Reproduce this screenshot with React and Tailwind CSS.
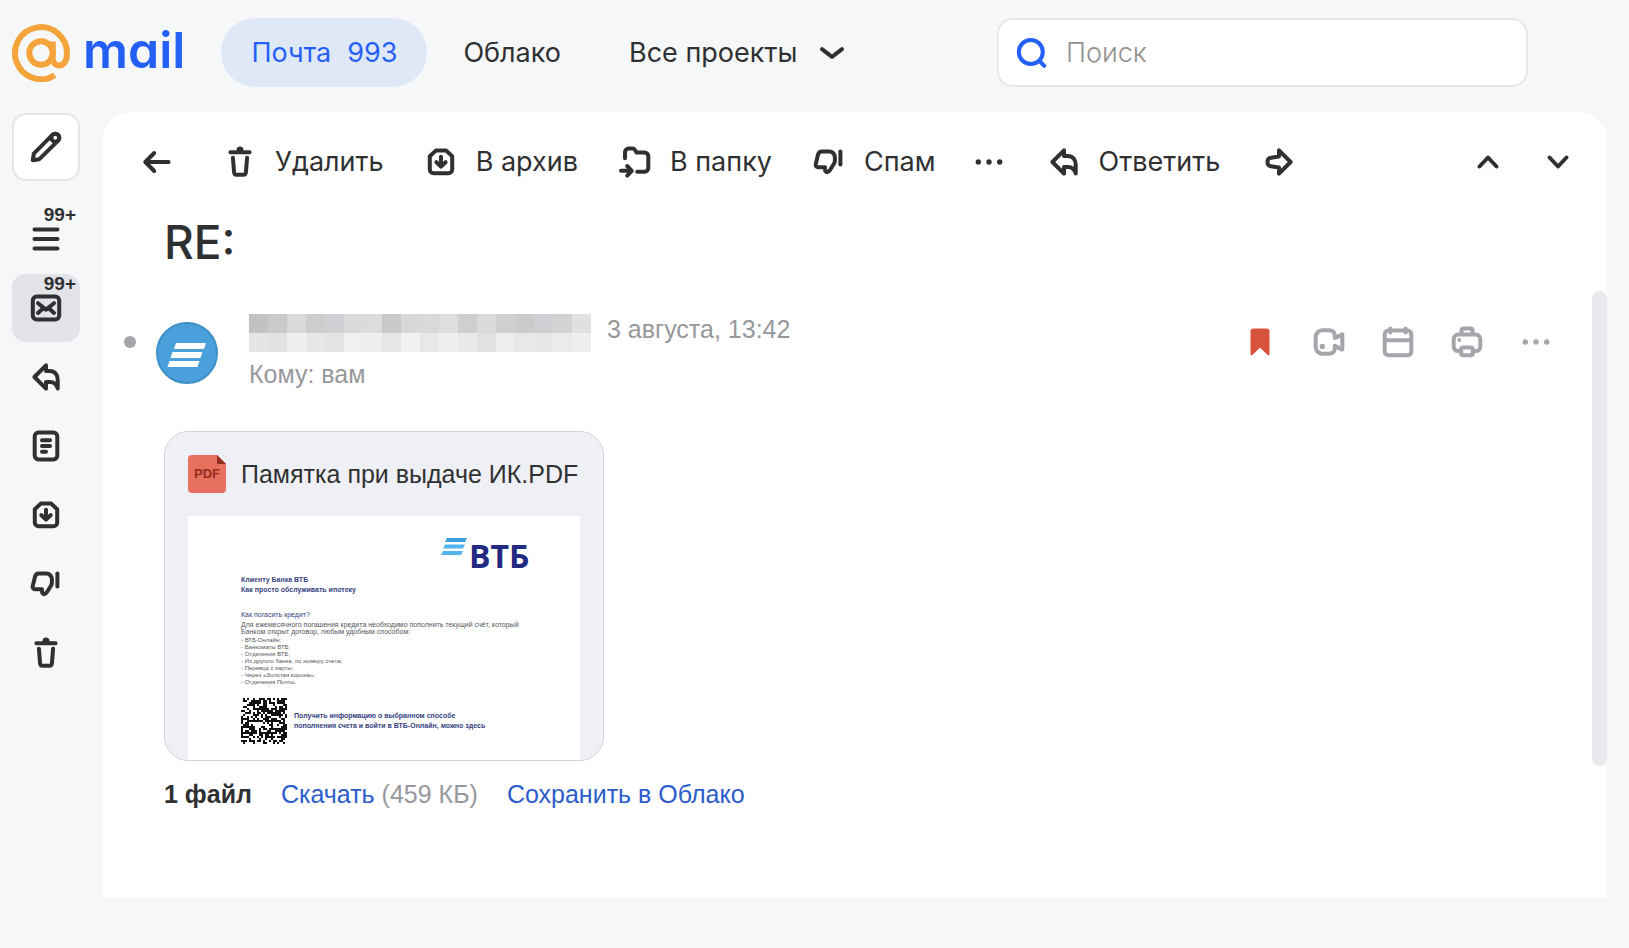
import { useState } from 'react';

const ICONS = {
  pencil: (
    <>
      <path d="M2.8 29.2l1-6.6L22.4 3.9a4 4 0 0 1 5.7 5.7L9.4 28.2z" />
      <circle cx="25.3" cy="6.8" r="4" />
    </>
  ),
  menu: <path d="M4.5 6.5h23M4.500 16h23M4.5 25.5h23" />,
  unread: (
    <>
      <rect x="2.8" y="4.4" width="26.4" height="23.2" rx="4" />
      <path d="M8 11.2l8 6.4 8-6.4M8 21l3.8-3.400M24 21l-3.8-3.4" />
    </>
  ),
  reply: <path d="M16 4.3L4.4 16 16 27.7V21h4c3.7 0 6.3 2 7.7 6.5v-9c0-5.2-3-8.5-8-8.500H16z" />,
  forward: <path d="M16 4.3L27.6 16 16 27.7v-6.2l-8-1.200a3.800 3.800 0 0 1-3.5-3.8v-1a3.8 3.8 0 0 1 3.5-3.8l8-1.2z" />,
  doc: (
    <>
      <rect x="4.7" y="2.6" width="22.6" height="26.8" rx="3.8" />
      <path d="M12 10.3h8M12 16h8M12 21.7h4" />
    </>
  ),
  archive: (
    <>
      <path d="M10.8 4.6h10.4l6 5.6v13.200a3.800 3.8 0 0 1-3.8 3.8H8.6a3.8 3.8 0 0 1-3.8-3.8V10.200z" />
      <path d="M16 10.800V20M11.4 16.2l4.6 4.400 4.600-4.4" />
    </>
  ),
  spam: (
    <>
      <path d="M8.800 5.6h7.600a5.500 5.5 0 0 1 5.5 5.5v3.4c0 1.3-.3 2.3-1 3.3l-4 6.4c-1 1.5-2 2.2-3.2 1.8-1.2-.4-1.7-1.6-1.7-3v-1.7H5a2.4 2.4 0 0 1-2.3-3l2.3-9.6a4 4 0 0 1 3.800-3.1z" />
      <path d="M27.400 5.600v12.800" />
    </>
  ),
  trash: (
    <>
      <path d="M6.4 6.3h19.2M8.9 11.7l1.2 14.6a2.6 2.6 0 0 0 2.6 2.4h6.6a2.6 2.6 0 0 0 2.6-2.4l1.2-14.6" />
      <circle cx="16" cy="4" r="1.5" fill="currentColor" />
    </>
  ),
  folder: (
    <>
      <path d="M6 12.3v-6a3.7 3.7 0 0 1 3.7-3.7h3.8c1 0 1.8.4 2.3 1.2l1.800 2.8h8a3.7 3.7 0 0 1 3.7 3.7V22a3.7 3.7 0 0 1-3.7 3.7h-7.4" />
      <path d="M2 24.800h10.500M8.200 20l4.600 4.800-4.600 4.8" />
    </>
  ),
  back: <path d="M27.600 16H4.6M13.2 7l-8.900 9 8.900 9" />,
  up: <path d="M7.500 20.5l8.500-9 8.500 9" />,
  down: <path d="M7.500 11.500l8.5 9 8.5-9" />,
  chevron: <path d="M6 12.200l10 7.600 10-7.6" />,
  more: (
    <g fill="currentColor" stroke="none">
      <circle cx="5.300" cy="16" r="2.700" />
      <circle cx="16" cy="16" r="2.7" />
      <circle cx="26.7" cy="16" r="2.7" />
    </g>
  ),
  search: (
    <>
      <circle cx="14.800" cy="15" r="12" />
      <path d="M23.500 24l4.800 4.800" />
    </>
  ),
  bookmark: (
    <path
      d="M9 2.4h14a2.5 2.5 0 0 1 2.5 2.5v23.3c0 1.2-1 1.5-1.8.7L16 21.8l-7.700 7.1c-.8.8-1.8.5-1.800-.7V4.900A2.5 2.5 0 0 1 9 2.400z"
      fill="currentColor"
      stroke="none"
    />
  ),
  video: (
    <>
      <path d="M9.3 4.300h6.500c3.7 0 5.400 1.5 6 4.600v3.200l7.500-3.700v15.200l-7.500-3.700v3.200c-.6 3-2.300 4.600-6 4.600H9.300a6.600 6.6 0 0 1-6.6-6.600V10.900a6.600 6.600 0 0 1 6.6-6.600z" />
      <circle cx="9.3" cy="20.4" r="2.700" fill="currentColor" stroke="none" />
    </>
  ),
  calendar: (
    <>
      <rect x="2.7" y="4.6" width="26.600" height="24.600" rx="3.600" />
      <path d="M2.700 14.2h26.600M8.300 2.500v4M23.700 2.500v4" />
    </>
  ),
  printer: (
    <>
      <path d="M10 25H7a4.300 4.300 0 0 1-4.300-4.300v-7.400A4.800 4.800 0 0 1 7.500 8.500h17a4.800 4.800 0 0 1 4.800 4.800v7.400A4.300 4.300 0 0 1 25 25h-3" />
      <path d="M10.500 8V4.500a2 2 0 0 1 2-2h7a2 2 0 0 1 2 2V8" />
      <rect x="10.200" y="21.500" width="11.600" height="7.800" rx="2" />
      <circle cx="8.300" cy="14" r="1.900" fill="currentColor" stroke="none" />
    </>
  ),
};

function Icon({ name, className = 'size-8' }) {
  return (
    <svg
      className={`shrink-0 overflow-visible ${className}`}
      viewBox="0 0 32 32"
      fill="none"
      stroke="currentColor"
      strokeWidth="4"
      strokeLinecap="round"
      strokeLinejoin="round"
      aria-hidden="true"
    >
      {ICONS[name]}
    </svg>
  );
}

const FOLDERS = [
  { icon: 'menu', label: 'Входящие', count: '99+' },
  { icon: 'unread', label: 'Непрочитанные', count: '99+', active: true },
  { icon: 'reply', label: 'Отправленные' },
  { icon: 'doc', label: 'Черновики' },
  { icon: 'archive', label: 'Архив' },
  { icon: 'spam', label: 'Спам' },
  { icon: 'trash', label: 'Корзина' },
];

const MOVE_ACTIONS = [
  { icon: 'trash', text: 'Удалить' },
  { icon: 'archive', text: 'В архив' },
  { icon: 'folder', text: 'В папку' },
  { icon: 'spam', text: 'Спам' },
];

const REPLY_ACTIONS = [
  { icon: 'more', label: 'Ещё' },
  { icon: 'reply', text: 'Ответить' },
  { icon: 'forward', label: 'Переслать' },
];

const LETTER_ACTIONS = [
  { icon: 'video', label: 'Создать звонок' },
  { icon: 'calendar', label: 'Создать событие' },
  { icon: 'printer', label: 'Распечатать' },
  { icon: 'more', label: 'Ещё' },
];

// hidden sender name, two rows of squares
const MOSAIC = [
  '#c3c2c1', '#cacaca', '#d9d9d9', '#cfcccd', '#cfd0d3', '#dadada', '#dcdcdc', '#c9c9c9', '#d8d8d8',
  '#d9d9d9', '#dedede', '#cfcfcf', '#d9d9dc', '#d0d0d0', '#cbcbcb', '#cfd0d3', '#d3d3d3', '#e0e0e3',
  '#e5e5e4', '#e2e2e2', '#eeeeee', '#e7e7e7', '#e4e4e4', '#f0f0f0', '#edf0ef', '#e6e6e6', '#f1f1f1',
  '#e8e8e8', '#efefef', '#e9e9e9', '#e1e1e1', '#eeeeee', '#e8e8e8', '#e7e7e7', '#ebebeb', '#eeeeee',
];

const BULLETS = [
  'ВТБ-Онлайн;',
  'Банкоматы ВТБ;',
  'Отделения ВТБ;',
  'Из другого банка, по номеру счета;',
  'Перевод с карты;',
  'Через «Золотая корона»;',
  'Отделения Почты.',
];

const QR_SIZE = 23;
const QR_CELLS = [];
for (let y = 0; y < QR_SIZE; y++) {
  for (let x = 0; x < QR_SIZE; x++) {
    const n = Math.sin(x * 12.9898 + y * 78.233) * 43758.5453;
    if (n - Math.floor(n) > 0.46) QR_CELLS.push([x, y]);
  }
}

function Logo() {
  return (
    <a href="#" className="flex items-start gap-[13px]" aria-label="Почта Mail">
      <svg className="size-[58px]" viewBox="0 0 58 58" fill="none" stroke="#f4a43a" strokeWidth="6">
        <circle cx="29" cy="29" r="11.7" />
        <path d="M40.7 17.5v16c0 4.500 2.5 8 6.500 8s7.800-3.800 7.800-12.500a26 26 0 1 0-12.200 22.200" />
      </svg>
      <span className="font-['Inter',sans-serif] text-[50px] font-semibold leading-[52px] text-[#2560f6] [font-feature-settings:'cv11']">
        mail
      </span>
    </a>
  );
}

function Header() {
  return (
    <header className="flex items-center pb-[25px] pl-3 pr-[101px] pt-[18px] text-[27px] leading-9">
      <Logo />
      <nav className="ml-9 flex items-center">
        <a href="#" className="flex h-[69px] items-center gap-4 rounded-full bg-[#dfe8f7] px-[30px] text-[#2560f6]">
          <span>Почта</span>
          <span>993</span>
        </a>
        <a href="#" className="ml-9">
          Облако
        </a>
        <button type="button" className="ml-[68px] flex items-center gap-[19px]">
          Все проекты
          <Icon name="chevron" />
        </button>
      </nav>
      <label className="ml-auto flex h-[69px] w-[531px] items-center gap-[18px] rounded-2xl border-2 border-[#e6e7eb] bg-white px-[17px]">
        <Icon name="search" className="size-8 text-[#2560f6]" />
        <input
          type="text"
          placeholder="Поиск"
          aria-label="Поиск"
          className="w-full min-w-0 bg-transparent font-light outline-none placeholder:text-[#919191]"
        />
      </label>
    </header>
  );
}

function Sidebar() {
  return (
    <aside className="flex w-[103px] shrink-0 flex-col pl-3 pt-px">
      <button
        type="button"
        aria-label="Написать письмо"
        className="mb-6 flex size-[68px] items-center justify-center rounded-[14px] border-2 border-[#e5e6ec] bg-white"
      >
        <Icon name="pencil" />
      </button>
      <nav className="flex flex-col gap-px">
        {FOLDERS.map((f) => (
          <a
            key={f.icon}
            href="#"
            aria-label={f.label}
            className={`relative flex size-[68px] items-center justify-center rounded-[14px] ${f.active ? 'bg-[#e3e4ea]' : ''}`}
          >
            <Icon name={f.icon} />
            {f.count && (
              <span className="absolute right-1 top-0 font-['Liberation_Sans',Arial,sans-serif] text-[19px] font-bold leading-5">
                {f.count}
              </span>
            )}
          </a>
        ))}
      </nav>
    </aside>
  );
}

function ToolbarButton({ icon, text, label }) {
  return (
    <button type="button" aria-label={label} className="flex items-center gap-[19px] whitespace-nowrap">
      <Icon name={icon} />
      {text}
    </button>
  );
}

function Toolbar() {
  return (
    <div className="flex h-12 items-center pl-[38px] pr-[33px] text-[27px] leading-9">
      <button type="button" aria-label="Назад">
        <Icon name="back" />
      </button>
      <div className="ml-[51px] flex gap-[41px]">
        {MOVE_ACTIONS.map((a) => (
          <ToolbarButton key={a.icon} {...a} />
        ))}
      </div>
      <div className="ml-[37px] flex gap-[43px]">
        {REPLY_ACTIONS.map((a) => (
          <ToolbarButton key={a.icon} {...a} />
        ))}
      </div>
      <div className="ml-auto flex gap-[38px]">
        <button type="button" aria-label="Предыдущее письмо">
          <Icon name="up" />
        </button>
        <button type="button" aria-label="Следующее письмо">
          <Icon name="down" />
        </button>
      </div>
    </div>
  );
}

function LetterHead({ flagged, onFlag }) {
  return (
    <div className="flex items-start pl-[21px] pr-10 pt-[23px] text-[#97989c]">
      <span className="mt-[22px] size-3 rounded-full bg-[#a5a6ac]" />
      <svg className="ml-5 mt-2 size-[62px]" viewBox="0 0 62 62" aria-hidden="true">
        <circle cx="31" cy="31" r="30" fill="#4aa0da" stroke="#3d8fc8" strokeWidth="2" />
        <path d="M20 21h30l-2 6H18zM16.500 30h30l-2 6h-30zM13.500 39h30l-2 6h-30z" fill="#fff" />
      </svg>
      <div className="ml-[31px]">
        <div className="flex items-start gap-4">
          <div className="grid grid-cols-[repeat(18,19px)]" aria-hidden="true">
            {MOSAIC.map((color, i) => (
              <span key={i} className="h-[19px]" style={{ backgroundColor: color }} />
            ))}
          </div>
          <time className="whitespace-nowrap text-[25px] leading-[30px]">3 августа, 13:42</time>
        </div>
        <p className="mt-[7px] text-[25px] leading-[30px]">Кому: вам</p>
      </div>
      <div className="ml-auto mt-3 flex gap-[37px] text-[#a5a6ac]">
        <button
          type="button"
          aria-label="Отметить флажком"
          onClick={onFlag}
          className={flagged ? 'text-[#d8533b]' : ''}
        >
          <Icon name="bookmark" />
        </button>
        {LETTER_ACTIONS.map((a) => (
          <button key={a.icon} type="button" aria-label={a.label}>
            <Icon name={a.icon} />
          </button>
        ))}
      </div>
    </div>
  );
}

function Preview() {
  return (
    <div className="h-[244px] overflow-hidden whitespace-nowrap bg-white pl-[53px] text-[7px] leading-[7px] text-[#55565c]">
      <div className="ml-[200px] flex items-start pt-[22px]">
        <svg className="h-[17px] w-[26px]" viewBox="0 0 26 17" aria-hidden="true">
          <path d="M6 0h20l-2 4H4z" fill="#3f9fdc" />
          <path d="M4 6.5h20l-2 4H2z" fill="#55b4ec" />
          <path d="M2 13h20l-2 4H0z" fill="#55b4ec" />
        </svg>
        <span className="ml-0.5 font-['Open_Sans',sans-serif] text-[32px] font-bold leading-9 text-[#232a82]">ВТБ</span>
      </div>
      <div className="mt-px font-bold leading-[10px] text-[#363f80]">
        <p>Клиенту Банка ВТБ</p>
        <p>Как просто обслуживать ипотеку</p>
      </div>
      <p className="mt-4 text-[#363f80]">Как погасить кредит?</p>
      <p className="mt-[3px]">Для ежемесячного погашения кредита необходимо пополнить текущий счёт, который</p>
      <p>Банком открыт договор, любым удобным способом:</p>
      <ul className="mt-0.5 text-[6px]">
        {BULLETS.map((b) => (
          <li key={b}>- {b}</li>
        ))}
      </ul>
      <div className="mt-3 flex items-center gap-[7px]">
        <svg className="size-[46px]" viewBox="0 0 23 23" shapeRendering="crispEdges" aria-hidden="true">
          {QR_CELLS.map(([x, y]) => (
            <rect key={`${x}-${y}`} x={x} y={y} width="1" height="1" fill="#111" />
          ))}
        </svg>
        <div className="font-bold leading-[10px] text-[#363f80]">
          <p>Получить информацию о выбранном способе</p>
          <p>пополнения счета и войти в ВТБ-Онлайн, можно здесь</p>
        </div>
      </div>
    </div>
  );
}

function Attachment() {
  return (
    <figure className="w-[440px] overflow-hidden rounded-3xl border border-[#d5d6de] bg-[#eff0f5] px-[23px] pt-[23px]">
      <figcaption className="mb-[23px] flex items-center gap-[15px] text-[25px] leading-[38px]">
        <span className="relative flex size-[38px] items-center justify-center overflow-hidden rounded-sm bg-[#e8705f] font-['Liberation_Sans',Arial,sans-serif] text-[13px] font-bold text-[#922e20]">
          PDF
          <svg className="absolute right-0 top-0 size-[9px]" viewBox="0 0 9 9" aria-hidden="true">
            <path d="M0 0h9v9z" fill="#eff0f5" />
            <path d="M0 0v9h9z" fill="#922e20" />
          </svg>
        </span>
        <span className="whitespace-nowrap">Памятка при выдаче ИК.PDF</span>
      </figcaption>
      <Preview />
    </figure>
  );
}

export default function App() {
  const [flagged, setFlagged] = useState(true);

  return (
    <div className="min-h-screen bg-[#f6f7f9] font-['Inter',sans-serif] text-[#2f3032]">
      <Header />
      <div className="flex pr-[22px]">
        <Sidebar />
        <main className="min-w-0 flex-1 rounded-t-[28px] bg-white pt-[26px]">
          <Toolbar />
          <h1 className="mt-8 pl-[61px] text-[46px] font-medium leading-[48px]">RE:</h1>
          <div className="mt-[25px] flex items-start font-['Liberation_Sans',Arial,sans-serif]">
            <article className="min-w-0 flex-1 pb-[89px]">
              <LetterHead flagged={flagged} onFlag={() => setFlagged(!flagged)} />
              <div className="mt-[42px] pl-[61px]">
                <Attachment />
                <div className="mt-[18px] flex items-center gap-[29px] text-[25px] leading-[30px]">
                  <b>1 файл</b>
                  <span className="text-[#97989c]">
                    <a href="#" className="text-[#2b5dcb]">
                      Скачать
                    </a>{' '}
                    (459 КБ)
                  </span>
                  <a href="#" className="text-[#2b5dcb]">
                    Сохранить в Облако
                  </a>
                </div>
              </div>
            </article>
            <div className="h-[475px] w-[15px] shrink-0 rounded-full bg-[#e9eaee]" />
          </div>
        </main>
      </div>
    </div>
  );
}
